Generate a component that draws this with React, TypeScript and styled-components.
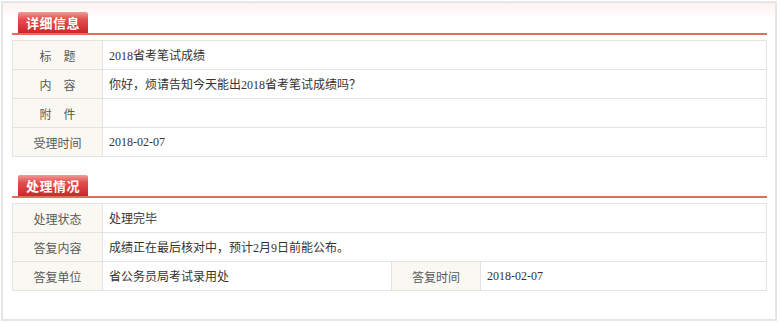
import React from 'react';
import styled, { createGlobalStyle } from 'styled-components';

const GlobalStyle = createGlobalStyle`
  html, body {
    margin: 0;
    padding: 0;
    background: #fff;
  }
  body {
    font-family: "Liberation Serif", "Noto Sans CJK SC", serif;
    font-size: 12px;
    color: #333;
  }
`;

const Panel = styled.div`
  margin: 1px 0 0 1px;
  width: 776px;
  height: 320px;
  box-sizing: border-box;
  border: 2px solid #e6e6e6;
  background: linear-gradient(to bottom, #fdf2ee 0, #ffffff 16px);
  padding: 9px 8px 0 9px;
`;

const Section = styled.div`
  & + & {
    margin-top: 18px;
  }
`;

const SectionHead = styled.div`
  border-bottom: 2px solid #df6f5c;
  padding-left: 6px;
  display: flex;
`;

const Tab = styled.div`
  width: 70px;
  height: 21px;
  line-height: 22px;
  text-align: center;
  color: #fff;
  font-family: "Noto Sans CJK SC", sans-serif;
  font-size: 13px;
  font-weight: bold;
  background: linear-gradient(to bottom, #f19a96 0, #e2504e 35%, #c9282b 100%);
  border-radius: 2px 2px 0 0;
  letter-spacing: 0.5px;
`;

const Table = styled.table`
  width: 100%;
  margin-top: 5px;
  border-collapse: collapse;
  table-layout: fixed;
  border: 1px solid #e3e3e3;
`;

const Row = styled.tr`
  height: 29px;
`;

const Label = styled.td`
  background: #f9f8f2;
  border: 1px solid #e3e3e3;
  text-align: center;
  color: #5a5a5a;
  font-family: "Noto Sans CJK SC", sans-serif;
  font-size: 12px;
  padding: 0;
`;

const Value = styled.td`
  border: 1px solid #e3e3e3;
  padding: 0 0 0 6px;
  color: #333;
  font-family: "Liberation Serif", "Noto Sans CJK SC", serif;
  font-size: 12px;
`;

export default function App() {
  return (
    <>
      <GlobalStyle />
      <Panel>
        <Section>
          <SectionHead>
            <Tab>详细信息</Tab>
          </SectionHead>
          <Table>
            <colgroup>
              <col style={{ width: 90 }} />
              <col />
            </colgroup>
            <tbody>
              <Row>
                <Label>标　题</Label>
                <Value>2018省考笔试成绩</Value>
              </Row>
              <Row>
                <Label>内　容</Label>
                <Value>你好，烦请告知今天能出2018省考笔试成绩吗？</Value>
              </Row>
              <Row>
                <Label>附　件</Label>
                <Value></Value>
              </Row>
              <Row>
                <Label>受理时间</Label>
                <Value>2018-02-07</Value>
              </Row>
            </tbody>
          </Table>
        </Section>

        <Section>
          <SectionHead>
            <Tab>处理情况</Tab>
          </SectionHead>
          <Table>
            <colgroup>
              <col style={{ width: 90 }} />
              <col style={{ width: 289 }} />
              <col style={{ width: 89 }} />
              <col />
            </colgroup>
            <tbody>
              <Row>
                <Label>处理状态</Label>
                <Value colSpan={3}>处理完毕</Value>
              </Row>
              <Row>
                <Label>答复内容</Label>
                <Value colSpan={3}>成绩正在最后核对中，预计2月9日前能公布。</Value>
              </Row>
              <Row>
                <Label>答复单位</Label>
                <Value>省公务员局考试录用处</Value>
                <Label>答复时间</Label>
                <Value>2018-02-07</Value>
              </Row>
            </tbody>
          </Table>
        </Section>
      </Panel>
    </>
  );
}
